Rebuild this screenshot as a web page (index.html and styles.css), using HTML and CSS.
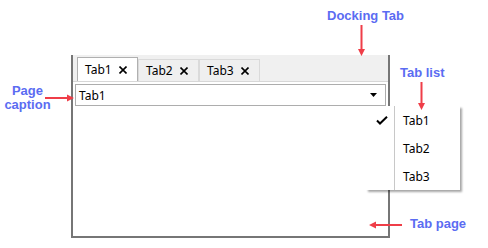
FILE: index.html
```html
<!DOCTYPE html>
<html lang="en">
<head>
  <meta charset="UTF-8">
  <title>Docking Tab</title>
  <link rel="stylesheet" href="styles.css">
</head>
<body>
  <div class="canvas">
    <!-- docking window -->
    <div class="dock">
      <div class="tabstrip">
        <div class="tab active">
          <span>Tab1</span>
          <svg class="close" width="8" height="8" viewBox="0 0 8 8"><path d="M0.5 0.5L7.5 7.5M7.5 0.5L0.5 7.5"/></svg>
        </div>
        <div class="tab">
          <span>Tab2</span>
          <svg class="close" width="8" height="8" viewBox="0 0 8 8"><path d="M0.5 0.5L7.5 7.5M7.5 0.5L0.5 7.5"/></svg>
        </div>
        <div class="tab">
          <span>Tab3</span>
          <svg class="close" width="8" height="8" viewBox="0 0 8 8"><path d="M0.5 0.5L7.5 7.5M7.5 0.5L0.5 7.5"/></svg>
        </div>
      </div>
      <div class="page">
        <div class="caption">
          <span>Tab1</span>
          <svg width="7" height="4" viewBox="0 0 7 4"><path d="M0 0H7L3.5 4Z"/></svg>
        </div>
      </div>
    </div>

    <!-- tab list popup -->
    <div class="menu">
      <div class="item">
        <span class="gutter">
          <svg width="12" height="9" viewBox="0 0 12 9"><path d="M1 4.5L4 7.5L11 0.8"/></svg>
        </span>
        <span class="label">Tab1</span>
      </div>
      <div class="item"><span class="gutter"></span><span class="label">Tab2</span></div>
      <div class="item"><span class="gutter"></span><span class="label">Tab3</span></div>
    </div>

    <!-- callouts -->
    <div class="note note-dock">Docking Tab</div>
    <div class="note note-list">Tab list</div>
    <div class="note note-caption">Page<br>caption</div>
    <div class="note note-page">Tab page</div>
    <svg class="arrows" width="488" height="248" viewBox="0 0 488 248">
      <path class="shaft" d="M361.5 25V50M421.5 82V104M45 98H68M402 225H375"/>
      <path class="head" d="M358 49H365L361.5 56Z M418 103H425L421.5 110Z M67 94.5V101.5L74 98Z M376 221.5V228.5L369 225Z"/>
    </svg>
  </div>
</body>
</html>
```

FILE: styles.css
```css
body {
  margin: 0;
  background: #fff;
  font-family: 'Noto Sans', sans-serif;
  font-size: 12px;
  color: #000;
}
.canvas {
  position: relative;
  width: 488px;
  height: 248px;
  overflow: hidden;
}
.dock {
  margin: 55px 0 0 71px;
  width: 315px;
  height: 181px;
  border: 2px solid #767676;
  border-top: none;
  display: flex;
  flex-direction: column;
}
/* tab header row */
.tabstrip {
  height: 26px;
  background: #f0f0f0;
  border-bottom: 1px solid #d7d7d7;
  display: flex;
  align-items: flex-end;
  padding-left: 4px;
}
.tab {
  box-sizing: border-box;
  width: 61px;
  height: 22px;
  display: flex;
  align-items: center;
  padding-left: 7px;
  background: #efefef;
  border: 1px solid #dadada;
  border-bottom: none;
}
.tab.active {
  height: 24px;
  background: #fff;
  border-color: #b0b0b0;
}
.tab span {
  width: 34px;
}
.close path {
  stroke: #000;
  stroke-width: 1.6;
  fill: none;
}
.page {
  flex: 1;
  background: #fff;
  padding: 2px 2px 0 2px;
}
.caption {
  height: 22px;
  box-sizing: border-box;
  border: 1px solid #adadad;
  display: flex;
  align-items: center;
  justify-content: space-between;
  padding: 0 8px 0 3px;
}
.caption path {
  fill: #000;
}
/* popup list */
.menu {
  position: absolute;
  left: 366px;
  top: 106px;
  width: 94px;
  background: #fff;
  box-shadow: 2px 2px 2px rgba(0,0,0,0.35);
}
.item {
  height: 28px;
  display: flex;
}
.gutter {
  width: 29px;
  border-right: 1px solid #c8c8c8;
  display: flex;
  align-items: center;
  justify-content: center;
  padding-left: 4px;
  box-sizing: border-box;
}
.gutter path {
  stroke: #000;
  stroke-width: 2;
  fill: none;
}
.label {
  display: flex;
  align-items: center;
  padding-left: 8px;
}
/* callouts */
.note {
  position: absolute;
  font-family: 'Liberation Sans', Arial, sans-serif;
  font-weight: bold;
  font-size: 13px;
  line-height: 16px;
  color: #5b6cf2;
}
.note-dock { left: 327px; top: 8px; }
.note-list { left: 400px; top: 65px; }
.note-page { left: 410px; top: 216px; }
.note-caption {
  left: 0;
  top: 84px;
  width: 55px;
  text-align: center;
  line-height: 14px;
}
.arrows {
  position: absolute;
  left: 0;
  top: 0;
  pointer-events: none;
}
.shaft {
  stroke: #ef3e48;
  stroke-width: 2;
  fill: none;
}
.head {
  fill: #ef3e48;
}
```
